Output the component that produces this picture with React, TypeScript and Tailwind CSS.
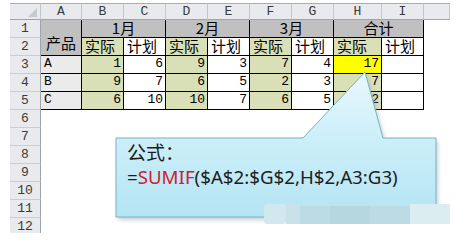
import React from "react"

const SHEET = "font-mono text-[13px] text-black"

const HEAD = "flex items-center justify-center bg-[#e8eaee] border-t border-[#a7acb3] border-b border-r text-[#3a3a3a]"
const ROWNUM = "flex items-center justify-center bg-[#e8eaee] border-r border-r-[#9ea4ab] border-b border-b-[#c9ccd1] text-[#3a3a3a]"
const CELL = "flex items-end border-r border-b border-black leading-[16px] pb-[1px]"
const CJK = "font-['Noto_Sans_CJK_SC',sans-serif] text-[15px]"

const fills: Record<string, string> = {
  g: "bg-[#d9e0b8]",
  w: "bg-white",
  y: "bg-[#ffff00]",
  a: "bg-[#ebebeb]",
}

const body = [
  { n: 3, label: "A", vals: [1, 6, 9, 3, 7, 4, 17, ""], fill: "gwgwgwyw" },
  { n: 4, label: "B", vals: [9, 7, 6, 5, 2, 3, 7, ""], fill: "gwgwgwgw" },
  { n: 5, label: "C", vals: [6, 10, 10, 7, 6, 5, 12, ""], fill: "gwgwgwgw" },
]

function Callout() {
  return (
    <svg className="absolute left-0 top-0 pointer-events-none" width="461" height="247">
      <defs>
        <linearGradient id="fill" x1="0" y1="72" x2="0" y2="217" gradientUnits="userSpaceOnUse">
          <stop offset="0" stopColor="#eaf8fd" />
          <stop offset="0.45" stopColor="#cdeff9" />
          <stop offset="1" stopColor="#b4e4f4" />
        </linearGradient>
        <filter id="sh" x="-10%" y="-10%" width="130%" height="130%">
          <feGaussianBlur stdDeviation="2" />
        </filter>
      </defs>
      <path d="M118,141 L305,141 L367,75 L385,141 L438,141 L438,220 L118,220 Z" fill="#9aa9ad" opacity="0.55" filter="url(#sh)" />
      <path d="M116,138 L303,138 L365,72 L383,138 L436,138 L436,217 L116,217 Z" fill="url(#fill)" stroke="#76b3c4" strokeWidth="1" />
      {/* blurred watermark */}
      <rect x="264" y="204" width="22" height="20" rx="3" fill="#d3e7ee" />
      <rect x="286" y="204" width="14" height="20" fill="#c9e2ea" />
      <rect x="300" y="206" width="110" height="18" fill="#bcdbe4" />
      <rect x="330" y="206" width="40" height="18" fill="#b6d7e0" />
      <rect x="410" y="204" width="40" height="20" fill="#dcedf2" />
    </svg>
  )
}

export default function App() {
  return (
    <div className="relative w-[461px] h-[247px] bg-white overflow-hidden">
      <div className="pt-[3px] pl-[10px]">
        <div className="h-[230px] overflow-hidden">
          <div className={`grid grid-cols-[31px_41px_42px_42px_42px_42px_42px_42px_48px_42px_26px] grid-rows-[17px_repeat(12,18px)] ${SHEET}`}>
            {/* column headers */}
            <div className={`${HEAD} border-r-[#c3c7cc] border-b-[#9ea4ab] relative`}>
              <svg className="absolute right-[3px] bottom-[2px]" width="9" height="9">
                <path d="M9,0 L9,9 L0,9 Z" fill="#c6c9ce" />
              </svg>
            </div>
            {["A", "B", "C", "D", "E", "F", "G", "H", "I"].map((c) => (
              <div key={c} className={`${HEAD} border-r-[#c3c7cc] border-b-[#9ea4ab]`}>
                {c}
              </div>
            ))}
            <div className={`${HEAD} border-r-[#c3c7cc] border-b-[#9ea4ab]`} />

            {/* row 1 */}
            <div className={ROWNUM}>1</div>
            <div className={`${CELL} ${CJK} row-span-2 bg-[#c0c0c0] justify-center items-end pb-[4px]`}>产品</div>
            {["1月", "2月", "3月", "合计"].map((t) => (
              <div key={t} className={`${CELL} ${CJK} col-span-2 bg-[#c0c0c0] justify-center`}>
                {t}
              </div>
            ))}
            <div />

            {/* row 2 */}
            <div className={ROWNUM}>2</div>
            {["实际", "计划", "实际", "计划", "实际", "计划", "实际", "计划"].map((t, i) => (
              <div key={i} className={`${CELL} ${CJK} ${i % 2 === 0 ? fills.g : fills.w} pl-[3px]`}>
                {t}
              </div>
            ))}
            <div />

            {body.map((r) => (
              <React.Fragment key={r.n}>
                <div className={ROWNUM}>{r.n}</div>
                <div className={`${CELL} ${fills.a} pl-[3px]`}>{r.label}</div>
                {r.vals.map((v, i) => (
                  <div key={i} className={`${CELL} ${fills[r.fill[i]]} justify-end pr-[2px]`}>
                    {v}
                  </div>
                ))}
                <div />
              </React.Fragment>
            ))}

            {[6, 7, 8, 9, 10, 11, 12].map((n) => (
              <React.Fragment key={n}>
                <div className={ROWNUM}>{n}</div>
                <div className="col-span-10" />
              </React.Fragment>
            ))}
          </div>
        </div>
      </div>

      <Callout />

      <div className="absolute left-[127px] top-[142px] font-['Noto_Sans','Noto_Sans_CJK_SC',sans-serif] text-[18.7px] leading-[23px] text-[#1c1c1c]">
        <div className="text-[19px]">公式：</div>
        <div>
          =<span className="text-[#d0202a]">SUMIF</span>($A$2:$G$2,H$2,A3:G3)
        </div>
      </div>
    </div>
  )
}
